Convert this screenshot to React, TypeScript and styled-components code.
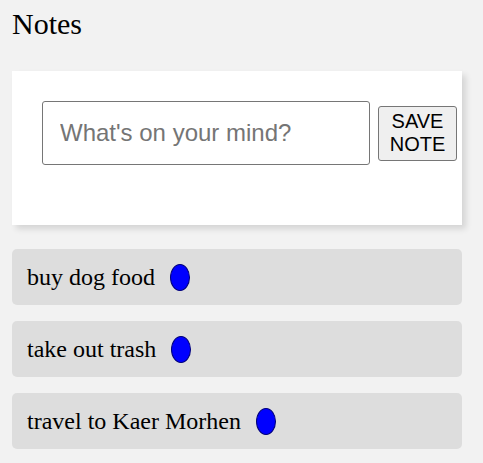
import styled, { createGlobalStyle } from 'styled-components';
import { useState } from 'react';

const GlobalStyle = createGlobalStyle`
    html, body {
        margin: 0;
        padding: 0;
        background: #f2f2f2;
    }
    body {
        font-family: "Liberation Serif", "Times New Roman", serif;
        color: #000;
    }
`;

const Page = styled.div`
    width: 450px;
    padding: 7px 0 0 12px;
`;

const Title = styled.h1`
    margin: 0 0 30px;
    font-size: 30px;
    line-height: 34px;
    font-weight: 400;
`;

const Card = styled.form`
    display: flex;
    align-items: center;
    gap: 8px;
    height: 154px;
    box-sizing: border-box;
    padding: 30px 5px 60px 30px;
    margin-bottom: 24px;
    background: #fff;
    box-shadow: 4px 4px 6px rgba(0, 0, 0, 0.12);
`;

const NoteInput = styled.input`
    width: 328px;
    height: 64px;
    box-sizing: border-box;
    padding: 0 17px;
    border: 1px solid #767676;
    border-radius: 3px;
    font-family: "Liberation Sans", Arial, sans-serif;
    font-size: 24px;
    color: #000;
    background: #fff;
    outline: none;
    &::placeholder {
        color: #757575;
    }
`;

const SaveButton = styled.button`
    width: 79px;
    height: 55px;
    box-sizing: border-box;
    padding: 3px 6px;
    border: 1px solid #767676;
    border-radius: 3px;
    background: #efefef;
    font-family: "Liberation Sans", Arial, sans-serif;
    font-size: 20px;
    line-height: 23px;
    color: #000;
    text-align: center;
`;

const List = styled.div`
    display: flex;
    flex-direction: column;
    gap: 16px;
`;

const NoteRow = styled.div`
    display: flex;
    align-items: center;
    gap: 15px;
    height: 56px;
    padding-left: 15px;
    border-radius: 5px;
    background: #dddddd;
    font-size: 24px;
    line-height: 28px;
`;

const Dot = styled.span<{ $color: string }>`
    width: 18px;
    height: 25px;
    border: 1px solid #00007a;
    border-radius: 50%;
    background: ${p => p.$color};
    cursor: pointer;
`;

const initialNotes = [
    { id: 1, text: 'buy dog food' },
    { id: 2, text: 'take out trash' },
    { id: 3, text: 'travel to Kaer Morhen' }
];

export default function App() {
    const [notes, setNotes] = useState(initialNotes);
    const [draft, setDraft] = useState('');

    function save(e: React.FormEvent) {
        e.preventDefault();
        if(!draft.trim()) return;
        setNotes(state => [...state, { id: Date.now(), text: draft }]);
        setDraft('');
    }

    return <>
        <GlobalStyle />
        <Page>
            <Title>Notes</Title>
            <Card onSubmit={save}>
                <NoteInput
                    placeholder="What's on your mind?"
                    value={draft}
                    onChange={e => setDraft(e.target.value)}
                />
                <SaveButton type='submit'>SAVE NOTE</SaveButton>
            </Card>
            <List>
                {
                    notes.map(n => (
                        <NoteRow key={n.id}>
                            {n.text}
                            <Dot $color='#0000ff' onClick={() => setNotes(s => s.filter(i => i.id !== n.id))} />
                        </NoteRow>
                    ))
                }
            </List>
        </Page>
    </>;
}
